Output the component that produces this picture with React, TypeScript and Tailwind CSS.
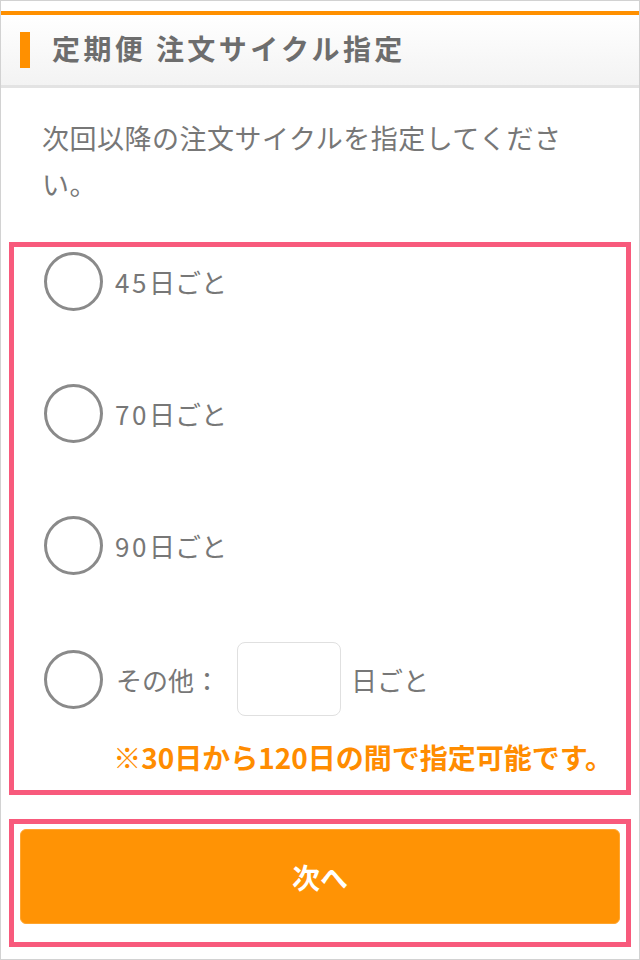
const options = ["45", "70", "90"];

function Radio() {
  return <span className="block size-[59px] shrink-0 rounded-full border-[3px] border-[#8a8a8a] bg-white" />;
}

export default function App() {
  return (
    <div
      className="w-[640px] h-[960px] overflow-hidden border border-[#d2d2d2] bg-white"
      style={{ fontFamily: '"Noto Sans CJK JP", "Noto Sans", sans-serif' }}
    >
      <div className="pt-[10px]">
        {/* Header */}
        <div className="border-t-4 border-[#ff9000]">
          <div className="flex h-[73px] items-center border-b-[3px] border-[#e3e3e3] bg-gradient-to-b from-white to-[#f3f3f3] pl-[19px]">
            <span className="block h-[36px] w-[10px] bg-[#ff9000]" />
            <h1 className="mb-[4px] ml-[22px] text-[28px] font-bold leading-none tracking-[3.4px] text-[#6d6d6d]">
              定期便 注文サイクル指定
            </h1>
          </div>
        </div>

        {/* Description */}
        <p className="pl-[41px] pt-[27px] text-[27px] leading-[46px] tracking-[0.5px] text-[#777]">
          次回以降の注文サイクルを指定してくださ<br />い。
        </p>

        {/* Options */}
        <div className="mx-[8px] mt-[35px] border-[5px] border-[#f85a7c] pb-[15px] pl-[30px] pr-[13px]">
          {options.map((days, i) => (
            <label
              key={days}
              className={`flex h-[59px] items-center gap-[12px] ${i === 0 ? "mt-[5px]" : "mt-[73px]"}`}
            >
              <Radio />
              <span className="text-[26px] text-[#777]">
                <span className="tracking-[2.5px]">{days}</span>日ごと
              </span>
            </label>
          ))}
          <label className="mt-[67px] flex h-[74px] items-center">
            <Radio />
            <span className="ml-[13px] text-[26px] text-[#777]">その他：</span>
            <input
              type="text"
              className="ml-[17px] h-[74px] w-[104px] rounded-lg border border-[#e0e0e0] bg-white outline-none"
            />
            <span className="ml-[10px] text-[26px] text-[#777]">日ごと</span>
          </label>
          <p className="mt-[23px] text-right text-[28px] font-bold leading-[36px] text-[#ff8c00]">
            ※30日から120日の間で指定可能です。
          </p>
        </div>

        {/* Next button */}
        <div className="mx-[8px] mt-[24px] border-[5px] border-[#f85a7c] px-[6px] pb-[18px] pt-[5px]">
          <button className="flex h-[95px] w-full items-center justify-center rounded-md border border-[#ffa52e] bg-[#ff9305] text-[28px] font-semibold text-white">
            次へ
          </button>
        </div>
      </div>
    </div>
  );
}
